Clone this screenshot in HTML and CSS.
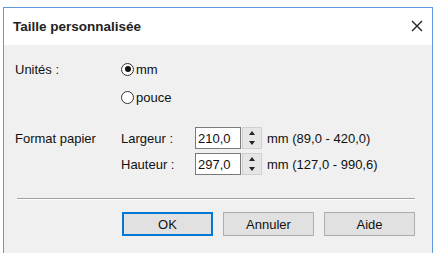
FILE: index.html
```html
<!DOCTYPE html>
<html lang="fr">
<head>
    <meta charset="UTF-8">
    <title>Taille personnalisée</title>
    <link rel="stylesheet" href="styles.css">
</head>
<body>
    <div class="dialog">
        <div class="titlebar">
            <span class="title">Taille personnalisée</span>
            <svg class="close" width="12" height="12" viewBox="0 0 12 12">
                <path d="M1 1 L11 11 M11 1 L1 11" stroke="#222" stroke-width="1.4" fill="none"/>
            </svg>
        </div>
        <div class="content">
            <div class="form units">
                <div class="label">Unités :</div>
                <div class="option wide"><span class="radio checked"></span>mm</div>
                <div></div>
                <div class="option wide"><span class="radio"></span>pouce</div>
            </div>
            <div class="form paper">
                <div class="label">Format papier</div>
                <div class="label">Largeur :</div>
                <div class="field">
                    <span class="input">210,0</span>
                    <span class="spin"><span class="up"></span><span class="down"></span></span>
                    <span class="range">mm (89,0 - 420,0)</span>
                </div>
                <div></div>
                <div class="label">Hauteur :</div>
                <div class="field">
                    <span class="input">297,0</span>
                    <span class="spin"><span class="up"></span><span class="down"></span></span>
                    <span class="range">mm (127,0 - 990,6)</span>
                </div>
            </div>
            <div class="separator"></div>
            <div class="buttons">
                <button class="default">OK</button>
                <button>Annuler</button>
                <button>Aide</button>
            </div>
        </div>
    </div>
</body>
</html>
```

FILE: styles.css
```css
body {
    margin: 0;
    background: #fff;
    font-family: "Liberation Sans", Arial, sans-serif;
    font-size: 13px;
    color: #111;
    overflow: hidden;
}
.dialog {
    margin: 7px 0 0 3px;
    width: 428px;
    height: 246px;
    border: 1px solid #5b9bd8;
    border-bottom: none;
    background: #f0f0f0;
}
.titlebar {
    height: 37px;
    background: #fff;
    display: flex;
    align-items: center;
    justify-content: space-between;
    padding: 0 9px 0 9px;
}
.title { font-size: 13.5px; font-weight: bold; color: #222; }
.close { margin-top: -2px; }
.content { padding: 10px 0 0 11px; }
.form {
    display: grid;
    grid-template-columns: 106px 74px auto;
    align-items: center;
}
.units { grid-auto-rows: 28px; }
.paper { grid-auto-rows: 22px; row-gap: 4px; margin-top: 16px; }
.wide { grid-column: 2 / 4; }
.option { display: flex; align-items: center; gap: 2px; }
.radio {
    width: 11px;
    height: 11px;
    border: 1px solid #333;
    border-radius: 50%;
    background: #fff;
    display: inline-flex;
    align-items: center;
    justify-content: center;
}
.radio.checked::after {
    content: "";
    width: 6px;
    height: 6px;
    border-radius: 50%;
    background: #111;
}
.field { display: flex; align-items: center; height: 22px; }
.input {
    box-sizing: border-box;
    width: 46px;
    height: 22px;
    border: 1px solid #7a7a7a;
    background: #fff;
    padding: 3px 0 0 2px;
}
.spin {
    box-sizing: border-box;
    width: 20px;
    height: 22px;
    margin-left: 1px;
    border: 1px solid #d0d0d0;
    background: #e6e6e6;
    display: flex;
    flex-direction: column;
    align-items: center;
    justify-content: space-around;
}
.up, .down { width: 0; height: 0; border-left: 3px solid transparent; border-right: 3px solid transparent; }
.up { border-bottom: 4px solid #222; }
.down { border-top: 4px solid #222; }
.range { margin-left: 5px; }
.separator {
    margin: 23px 0 0 2px;
    width: 398px;
    height: 1px;
    background: #a0a0a0;
    border-bottom: 1px solid #fff;
}
.buttons {
    display: flex;
    justify-content: flex-end;
    gap: 10px;
    width: 400px;
    margin-top: 12px;
}
button {
    width: 91px;
    height: 24px;
    font-family: "Liberation Sans", Arial, sans-serif;
    font-size: 13px;
    color: #111;
    background: #e1e1e1;
    border: 1px solid #adadad;
    padding: 0;
}
button.default { border: 2px solid #0078d7; }
```
